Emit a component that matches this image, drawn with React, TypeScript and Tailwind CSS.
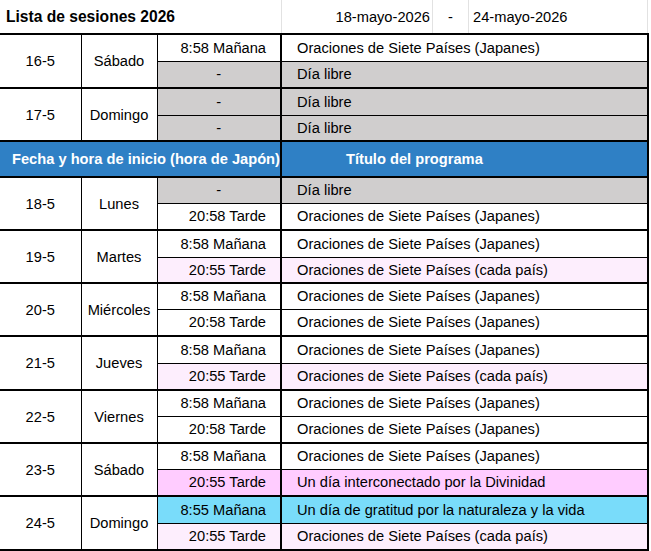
import React from 'react'

type Slot = {
  time: string
  title: string
  tone?: 'gray' | 'blush' | 'pink' | 'cyan'
  h: number
}

type Day = {
  date: string
  name: string
  slots: [Slot, Slot]
}

const before: Day[] = [
  {
    date: '16-5',
    name: 'Sábado',
    slots: [
      { time: '8:58 Mañana', title: 'Oraciones de Siete Países (Japanes)', h: 27 },
      { time: '-', title: 'Día libre', tone: 'gray', h: 27 },
    ],
  },
  {
    date: '17-5',
    name: 'Domingo',
    slots: [
      { time: '-', title: 'Día libre', tone: 'gray', h: 27 },
      { time: '-', title: 'Día libre', tone: 'gray', h: 26 },
    ],
  },
]

const week: Day[] = [
  {
    date: '18-5',
    name: 'Lunes',
    slots: [
      { time: '-', title: 'Día libre', tone: 'gray', h: 26 },
      { time: '20:58 Tarde', title: 'Oraciones de Siete Países (Japanes)', h: 27 },
    ],
  },
  {
    date: '19-5',
    name: 'Martes',
    slots: [
      { time: '8:58 Mañana', title: 'Oraciones de Siete Países (Japanes)', h: 27 },
      { time: '20:55 Tarde', title: 'Oraciones de Siete Países (cada país)', tone: 'blush', h: 26 },
    ],
  },
  {
    date: '20-5',
    name: 'Miércoles',
    slots: [
      { time: '8:58 Mañana', title: 'Oraciones de Siete Países (Japanes)', h: 26 },
      { time: '20:58 Tarde', title: 'Oraciones de Siete Países (Japanes)', h: 27 },
    ],
  },
  {
    date: '21-5',
    name: 'Jueves',
    slots: [
      { time: '8:58 Mañana', title: 'Oraciones de Siete Países (Japanes)', h: 27 },
      { time: '20:55 Tarde', title: 'Oraciones de Siete Países (cada país)', tone: 'blush', h: 27 },
    ],
  },
  {
    date: '22-5',
    name: 'Viernes',
    slots: [
      { time: '8:58 Mañana', title: 'Oraciones de Siete Países (Japanes)', h: 26 },
      { time: '20:58 Tarde', title: 'Oraciones de Siete Países (Japanes)', h: 27 },
    ],
  },
  {
    date: '23-5',
    name: 'Sábado',
    slots: [
      { time: '8:58 Mañana', title: 'Oraciones de Siete Países (Japanes)', h: 26 },
      { time: '20:55 Tarde', title: 'Un día interconectado por la Divinidad', tone: 'pink', h: 27 },
    ],
  },
  {
    date: '24-5',
    name: 'Domingo',
    slots: [
      { time: '8:55 Mañana', title: 'Un día de gratitud por la naturaleza y la vida', tone: 'cyan', h: 27 },
      { time: '20:55 Tarde', title: 'Oraciones de Siete Países (cada país)', tone: 'blush', h: 27 },
    ],
  },
]

const toneBg = {
  gray: 'bg-[#d0cece]',
  blush: 'bg-[#fdeefd]',
  pink: 'bg-[#ffccff]',
  cyan: 'bg-[#79dcfa]',
}

function DayRows({ day }: { day: Day }) {
  return (
    <>
      {day.slots.map((slot, i) => {
        const bg = slot.tone ? toneBg[slot.tone] : 'bg-white'
        const bottom = i === 0 ? 'border-b border-b-black' : 'border-b-2 border-b-black'
        return (
          <tr key={i} style={{ height: slot.h }}>
            {i === 0 && (
              <>
                <td rowSpan={2} className="border-b-2 border-r border-black bg-white p-0 text-center">
                  {day.date}
                </td>
                <td rowSpan={2} className="border-b-2 border-r border-black bg-white p-0 text-center">
                  {day.name}
                </td>
              </>
            )}
            <td
              className={`${bg} ${bottom} border-r-2 border-r-black p-0 ${
                slot.time === '-' ? 'text-center' : 'pr-[14px] text-right'
              }`}
            >
              {slot.time}
            </td>
            <td className={`${bg} ${bottom} border-r-2 border-r-black p-0 pl-[15px] text-left`}>
              {slot.title}
            </td>
          </tr>
        )
      })}
    </>
  )
}

export default function App() {
  return (
    <div className="min-h-screen bg-white font-['Liberation_Sans',Arial,sans-serif] text-[14.67px] text-black">
      <div className="flex h-[33px] w-[648px] items-center">
        <div className="flex h-full w-[282px] items-center border-r border-[#e2e2e2] pl-[6px] text-[15.6px] font-bold">
          Lista de sesiones 2026
        </div>
        <div className="flex h-full w-[151px] items-center justify-end border-r border-[#e2e2e2] pr-[2px]">
          18-mayo-2026
        </div>
        <div className="flex h-full w-[36px] items-center justify-center border-r border-[#e2e2e2]">-</div>
        <div className="flex h-full flex-1 items-center border-r border-[#e2e2e2] pl-[4px]">24-mayo-2026</div>
      </div>

      <table className="w-[648px] table-fixed border-collapse border-t-2 border-black">
        <colgroup>
          <col className="w-[81px]" />
          <col className="w-[76px]" />
          <col className="w-[124px]" />
          <col className="w-[367px]" />
        </colgroup>
        <tbody>
          {before.map((d) => (
            <DayRows key={d.date} day={d} />
          ))}
          <tr className="h-[36px] bg-[#2f80c5] font-bold text-white">
            <td colSpan={3} className="border-y-2 border-r-2 border-black p-0 pl-[12px] text-left">
              Fecha y hora de inicio (hora de Japón)
            </td>
            <td className="border-y-2 border-r-2 border-black p-0 pl-[64px] text-left">Título del programa</td>
          </tr>
          {week.map((d) => (
            <DayRows key={d.date} day={d} />
          ))}
        </tbody>
      </table>
    </div>
  )
}
